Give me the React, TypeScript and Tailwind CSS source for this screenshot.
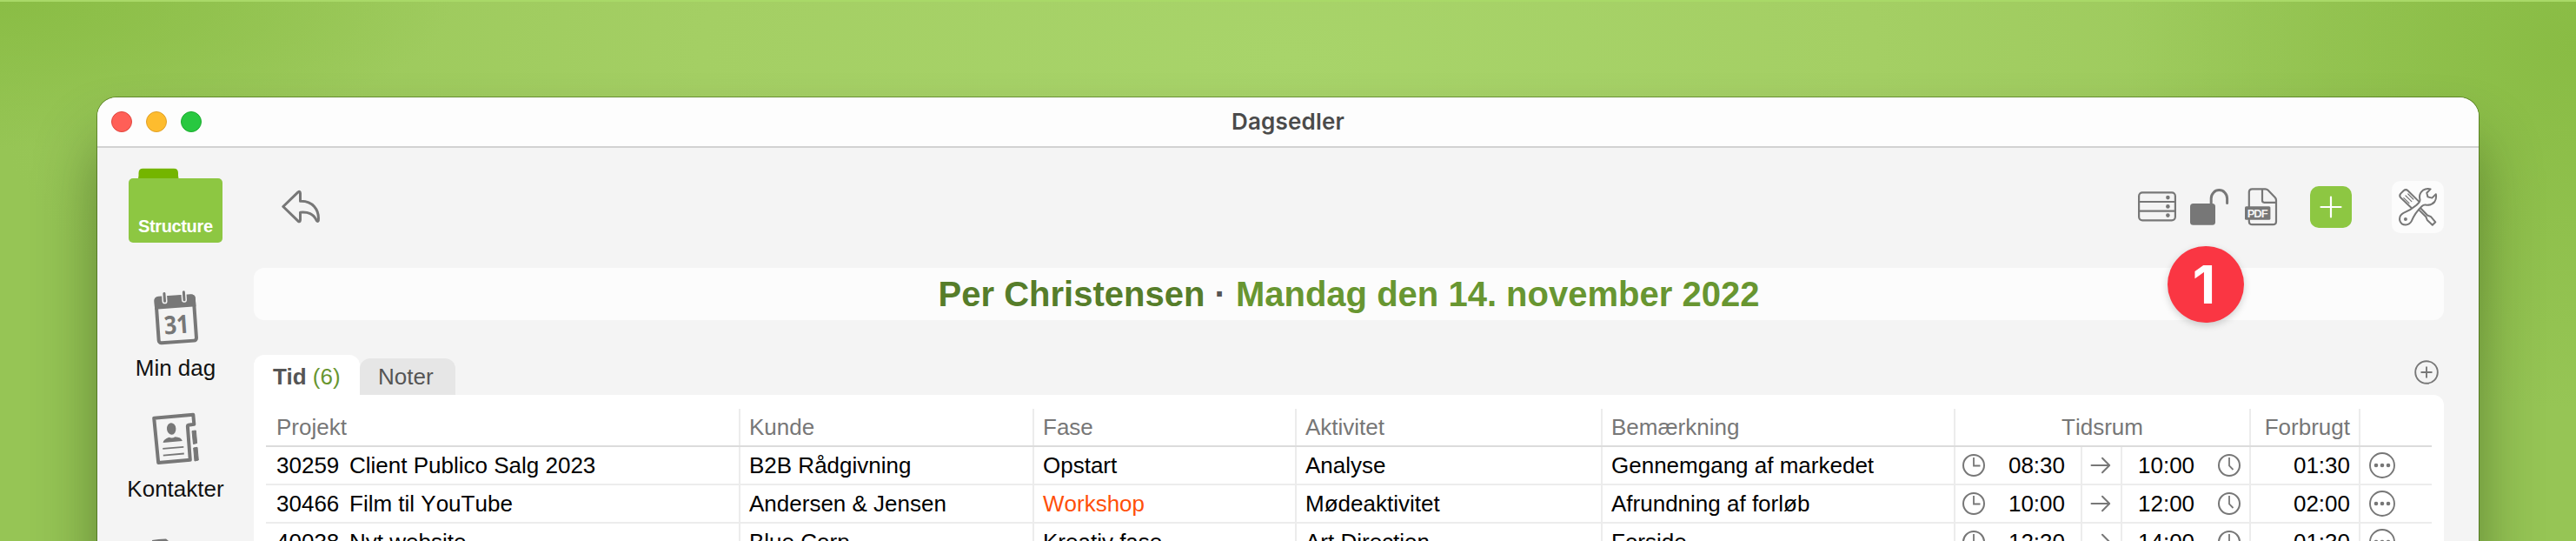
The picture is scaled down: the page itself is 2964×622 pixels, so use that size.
import type { ReactNode } from "react";

const G = "#777777";

function Folder() {
  return (
    <svg width="108" height="88" viewBox="0 0 108 88">
      <path d="M10 13Q11.500 12 11.500 9V6Q11.500 .800 16.500 .800H52Q57 .800 57 6V9Q57 12 58.500 13Z" fill="#74b500" />
      <rect x="0" y="12" width="108" height="74" rx="5" fill="#8dc742" />
      <text x="54" y="74" textAnchor="middle" textLength="86" fontFamily="Liberation Sans, Arial, sans-serif" fontWeight="700" fontSize="20" fill="#fff">
        Structure
      </text>
    </svg>
  );
}

function CalendarIcon() {
  return (
    <svg width="60" height="68" viewBox="0 0 60 68">
      <g transform="rotate(-4 30.6 34.7)">
        <rect x="9" y="9.5" width="43.4" height="51.5" rx="3" fill="none" stroke={G} strokeWidth="4" />
        <path d="M7 22V12Q7 8 11 8H50.400Q54.400 8 54.400 12V22Z" fill={G} />
        <text x="30.700" y="51.500" textAnchor="middle" textLength="29" lengthAdjust="spacingAndGlyphs" fontFamily="Noto Sans, sans-serif" fontWeight="700" fontSize="29" fill={G}>
          31
        </text>
        <path d="M19 5.500V13.500M41.500 5.500V13.500" stroke="#f4f4f4" strokeWidth="6" strokeLinecap="round" />
        <path d="M19 4.500V13.500M41.500 4.500V13.500" stroke={G} strokeWidth="3" strokeLinecap="round" />
      </g>
    </svg>
  );
}

function ContactsIcon() {
  return (
    <svg width="60" height="68" viewBox="0 0 60 68">
      <path d="M5.200 9.700L50.300 5.800L51.300 16.800L44.800 17.800Q43.700 18 43.900 19.500L46.800 57.800L10.200 61Z" fill="none" stroke={G} strokeWidth="4" strokeLinejoin="round" />
      <path d="M49 24.500L53.300 24L54.600 38.500L50.500 39.500ZM50.700 44L55 43.300L56.300 58L52 59Z" fill={G} stroke={G} strokeWidth="1" strokeLinejoin="round" />
      <ellipse cx="25.200" cy="22" rx="5.200" ry="6.800" fill={G} transform="rotate(-5 25 22)" />
      <path d="M15.600 38Q16 34 22.500 31.800Q26 33.500 29.500 31.200Q36.500 31.500 37.800 36Z" fill={G} />
      <path d="M15.300 44.900L39.300 42.800M15.800 52.700L39.800 50.500" stroke={G} strokeWidth="1.800" />
    </svg>
  );
}

function BackIcon() {
  return (
    <svg width="52" height="52" viewBox="0 0 52 52" fill="none" stroke={G} strokeWidth="3" strokeLinejoin="round">
      <path d="M5.800 25.500L23 8.900Q25.500 7.300 25.500 10.500V19.200C39.500 18.600 47.500 29 46.300 41.500Q45.600 43.600 44.200 41.500C40.600 33.200 34.500 31.600 25.500 32.200V41Q25.300 43.800 23 42.200Z" />
    </svg>
  );
}

function ListIcon() {
  return (
    <svg width="48" height="48" viewBox="0 0 48 48" fill="none" stroke={G} strokeWidth="2.200">
      <rect x="3.100" y="7.400" width="41.800" height="31.900" rx="4" />
      <path d="M3 18H45M3 28.700H45" />
      <g fill={G} stroke="none">
        <circle cx="36.400" cy="13.100" r="2.300" />
        <circle cx="36.400" cy="23.400" r="2.300" />
        <circle cx="36.400" cy="33.600" r="2.300" />
      </g>
    </svg>
  );
}

function UnlockIcon() {
  return (
    <svg width="48" height="48" viewBox="0 0 48 48">
      <rect x="2" y="20" width="29" height="24.700" rx="3.500" fill={G} />
      <path d="M26.200 21V14.300A9.200 9.700 0 0 1 44.600 14.300V19.400" fill="none" stroke={G} strokeWidth="3" strokeLinecap="round" />
    </svg>
  );
}

function PdfIcon() {
  return (
    <svg width="44" height="48" viewBox="0 0 44 48">
      <path d="M7.800 24V7Q7.800 3.300 11.500 3.300H26.500Q28.300 3.300 29.500 4.500L37.700 13Q39 14.400 39 16.200V40.500Q39 44.200 35.300 44.200H11.500Q7.800 44.200 7.800 40.500V38M23 3.300V16.600Q23 18.800 25.200 18.800H38.800" fill="none" stroke={G} strokeWidth="2.200" />
      <rect x="3" y="23.300" width="29.400" height="15.500" rx="1.500" fill={G} />
      <text x="17.700" y="35.800" textAnchor="middle" textLength="24" fontFamily="Liberation Sans, Arial, sans-serif" fontWeight="700" fontSize="13" fill="#f4f4f4">
        PDF
      </text>
    </svg>
  );
}

function ToolsIcon() {
  return (
    <svg width="60" height="60" viewBox="0 0 60 60" fill="none" stroke={G} strokeWidth="2" strokeLinejoin="round" strokeLinecap="round">
      <path d="M22.600 31L10.300 19.300Q8.200 17 10.200 14.600L13.600 11.200Q16.200 9 18.600 11.200L31.200 23.600" />
      <path d="M13.800 19.600L20 25.600M16 17L22.800 23.600M18.800 15L24.800 21" strokeWidth="1.200" />
      <path d="M31.600 33.600L39.300 41.200L40.800 45L46.800 50.800L50.300 47.300L45 41.200L41 39.500L33.600 31.800" />
      <path d="M44.600 9.400Q40 8 36 10.700Q30.800 14.500 32.400 21.300Q32.800 23.400 31 25.300L28.500 27.800Q22 33.500 13.500 36.900Q8.300 39.600 9.200 45.300Q10.600 50.600 16 50.600Q20.800 50.300 22.900 45.900C25.500 39.500 29 34.500 34.500 29.200Q36.500 27.300 38.800 27.500Q45.500 28.500 49.300 24Q51.800 20.300 50.800 15.200L46.300 19.600L41.400 18.300L40.300 13.700Z" />
      <circle cx="15.900" cy="43.900" r="2" fill={G} stroke="none" />
    </svg>
  );
}

function Clock({ hand }: { hand: string }) {
  return (
    <svg width="28" height="28" viewBox="0 0 28 28" fill="none" stroke={G} strokeWidth="2">
      <circle cx="14" cy="14" r="12" />
      <path d={hand} strokeWidth="1.800" />
    </svg>
  );
}

function Arrow() {
  return (
    <svg width="24" height="20" viewBox="0 0 24 20" fill="none" stroke={G} strokeWidth="2" strokeLinecap="round" strokeLinejoin="round">
      <path d="M1.500 10H22M14 1.800L22.200 10L14 18.200" />
    </svg>
  );
}

function More() {
  return (
    <svg width="32" height="32" viewBox="0 0 32 32" fill={G}>
      <circle cx="16" cy="16" r="14" fill="none" stroke={G} strokeWidth="1.900" />
      <circle cx="9" cy="16" r="2.300" />
      <circle cx="16" cy="16" r="2.300" />
      <circle cx="23" cy="16" r="2.300" />
    </svg>
  );
}

const GRID = "grid grid-cols-[546px_338px_302px_352px_406px_146px_46px_148px_126px_82px]";
const HEAD = "border-r-2 border-[#ececec] pl-[10px]";

function Cell({ children, className = "pl-[10px]", last = false }: { children?: ReactNode; className?: string; last?: boolean }) {
  return (
    <div className={`h-[44px] border-b-2 border-[#ececec] leading-[42px] whitespace-pre ${last ? "" : "border-r-2"} ${className}`}>{children}</div>
  );
}

interface Entry {
  no: string;
  project: string;
  client: string;
  phase: string;
  alert?: boolean;
  activity: string;
  note: string;
  from: string;
  to: string;
  spent: string;
}

const entries: Entry[] = [
  { no: "30259", project: "Client Publico Salg 2023", client: "B2B Rådgivning", phase: "Opstart", activity: "Analyse", note: "Gennemgang af markedet", from: "08:30", to: "10:00", spent: "01:30" },
  { no: "30466", project: "Film til YouTube", client: "Andersen & Jensen", phase: "Workshop", alert: true, activity: "Mødeaktivitet", note: "Afrundning af forløb", from: "10:00", to: "12:00", spent: "02:00" },
  { no: "40038", project: "Nyt website", client: "Blue Corp", phase: "Kreativ fase", activity: "Art Direction", note: "Forside", from: "12:30", to: "14:00", spent: "01:30" },
];

function Row({ e }: { e: Entry }) {
  return (
    <div className={GRID}>
      <Cell className="flex pl-[12px]">
        <span className="w-[84px]">{e.no}</span>
        <span>{e.project}</span>
      </Cell>
      <Cell>{e.client}</Cell>
      <Cell className={e.alert ? "pl-[10px] text-[#ff4f0a]" : "pl-[10px]"}>{e.phase}</Cell>
      <Cell>{e.activity}</Cell>
      <Cell>{e.note}</Cell>
      <Cell className="flex items-center justify-between pl-[7px] pr-[18px]">
        <Clock hand="M14 5V14.500H21.500" />
        <span>{e.from}</span>
      </Cell>
      <Cell className="flex items-center pl-[9px]">
        <Arrow />
      </Cell>
      <Cell className="flex items-center justify-between pl-[18px] pr-[9px]">
        <span>{e.to}</span>
        <Clock hand="M14 5V14.500L18.500 19" />
      </Cell>
      <Cell className="pr-[10px] text-right">{e.spent}</Cell>
      <Cell last className="flex items-center pl-[9px]">
        <More />
      </Cell>
    </div>
  );
}

export default function App() {
  return (
    <div className="relative h-[622px] w-[2964px] overflow-hidden border-t-2 border-[#a9d968] bg-[radial-gradient(ellipse_520px_170px_at_0%_0%,#8abd45_0%,transparent_100%),radial-gradient(ellipse_520px_420px_at_100%_8%,#89bc44_0%,transparent_100%),radial-gradient(ellipse_1500px_620px_at_50%_10%,#a8d46a_0%,#a4cf64_45%,#96c555_100%)] px-[112px] pt-[110px] font-['Liberation_Sans',Arial,sans-serif] text-[26px] text-black">
      <div className="h-[700px] rounded-t-[22px] bg-[#f4f4f4] shadow-[0_0_0_1px_rgba(40,70,0,0.45),0_50px_70px_rgba(20,40,0,0.42)]">
        <div className="flex h-[58px] items-center rounded-t-[22px] border-b-2 border-[#d2d2d2] bg-[#fdfdfd]">
          <div className="flex flex-1 gap-4 pl-4">
            <div className="size-6 rounded-full border border-[#e2463f] bg-[#ff5f57]" />
            <div className="size-6 rounded-full border border-[#e0a028] bg-[#febc2e]" />
            <div className="size-6 rounded-full border border-[#1bac2e] bg-[#28c840]" />
          </div>
          <div className="font-[Inter] font-semibold leading-[32px] tracking-[0.2px] text-[#4b4b4b]">Dagsedler</div>
          <div className="flex-1 pr-4" />
        </div>

        <div className="flex">
          <div className="flex w-[180px] flex-col items-center pt-[23px] leading-[30px] text-[#111]">
            <Folder />
            <div className="mt-[51px] flex flex-col items-center gap-2">
              <CalendarIcon />
              <span>Min dag</span>
            </div>
            <div className="mt-[33px] flex flex-col items-center gap-2">
              <ContactsIcon />
              <span>Kontakter</span>
            </div>
            <svg className="mt-[42px]" width="60" height="30" viewBox="0 0 60 30">
              <path d="M3 2Q10 .600 19 .500L22 3L23 12H4Z" fill={G} />
            </svg>
          </div>

          <div className="w-[2520px]">
            <div className="flex h-[138px] items-center pb-[2px] pl-[28px]">
              <BackIcon />
              <div className="ml-auto flex items-center">
                <ListIcon />
                <div className="ml-3">
                  <UnlockIcon />
                </div>
                <div className="ml-[14px]">
                  <PdfIcon />
                </div>
                <div className="ml-[34px] flex size-12 items-center justify-center rounded-[10px] bg-[#8dc742]">
                  <svg width="28" height="28" viewBox="0 0 28 28" stroke="#fff" strokeWidth="2.200" strokeLinecap="round">
                    <path d="M2.500 14H25.500M14 2.500V25.500" />
                  </svg>
                </div>
                <div className="ml-[46px] rounded-[10px] bg-[#fcfcfc]">
                  <ToolsIcon />
                </div>
              </div>
            </div>

            <div className="flex h-[60px] items-center justify-center rounded-[12px] bg-[#fcfcfc] text-[40px] font-bold leading-[60px] text-[#689631]">
              <div className="whitespace-pre">
                <span className="text-[#567d2a]">Per Christensen</span>
                <span className="text-[#555]"> · </span>Mandag den 14. november 2022
              </div>
            </div>

            <div className="mt-10 flex h-[46px] items-end text-[#555]">
              <div className="h-[46px] w-[122px] rounded-t-[12px] bg-white pl-[22px] leading-[51px]">
                <span className="font-bold">Tid</span> <span className="text-[#68962f]">(6)</span>
              </div>
              <div className="h-[42px] w-[110px] rounded-t-[12px] bg-[#e6e6e6] pl-[21px] leading-[43px]">Noter</div>
              <svg className="mr-[5px] mb-[11px] ml-auto" width="30" height="30" viewBox="0 0 30 30" fill="none" stroke={G} strokeWidth="1.900">
                <circle cx="15" cy="15" r="12.800" />
                <path d="M8.500 15H21.500M15 8.500V21.500" />
              </svg>
            </div>

            <div className="h-[300px] rounded-tr-[12px] bg-white px-[14px] pt-4 [font-kerning:none]">
              <div className="grid h-[44px] grid-cols-[546px_338px_302px_352px_406px_340px_126px_82px] border-b-2 border-[#dcdcdc] leading-[42px] text-[#777]">
                <div className="border-r-2 border-[#ececec] pl-[12px]">Projekt</div>
                <div className={HEAD}>Kunde</div>
                <div className={HEAD}>Fase</div>
                <div className={HEAD}>Aktivitet</div>
                <div className={HEAD}>Bemærkning</div>
                <div className="border-r-2 border-[#ececec] text-center">Tidsrum</div>
                <div className="border-r-2 border-[#ececec] pr-[10px] text-right">Forbrugt</div>
              </div>
              {entries.map((e) => (
                <Row key={e.no} e={e} />
              ))}
            </div>
          </div>
        </div>
      </div>

      <div className="absolute top-[281px] left-[2494px] flex size-[88px] items-center justify-center rounded-full bg-[#fa3643] pr-1 font-[Inter] text-[61px] leading-none font-bold text-white shadow-[0_3px_8px_rgba(0,0,0,0.18)]">
        1
      </div>
    </div>
  );
}
